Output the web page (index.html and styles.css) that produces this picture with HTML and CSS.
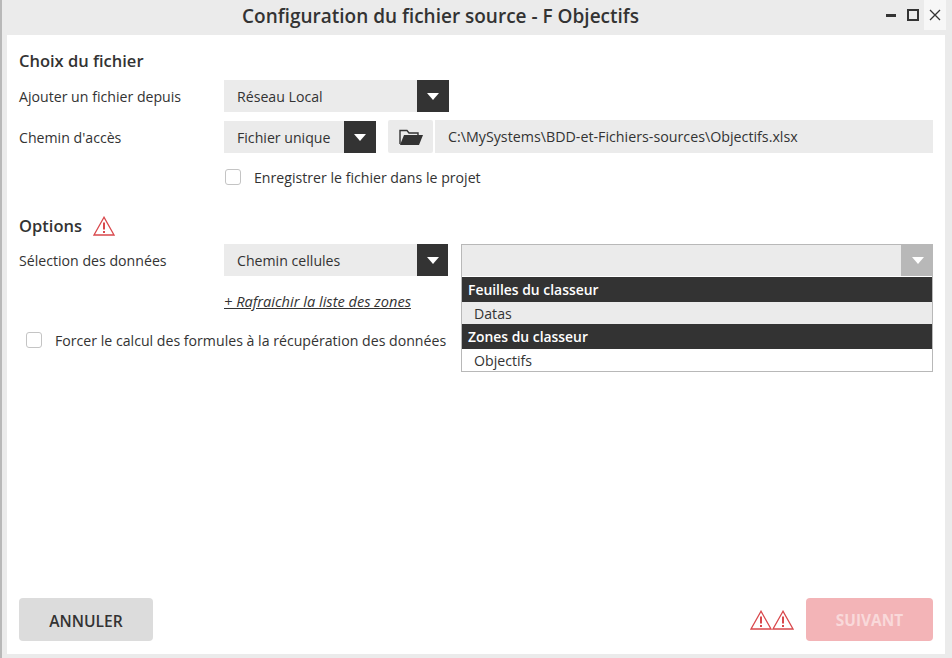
FILE: index.html
```html
<!DOCTYPE html>
<html lang="fr">
<head>
    <meta charset="UTF-8">
    <title>Configuration du fichier source</title>
    <link rel="stylesheet" href="styles.css">
</head>
<body>
    <div class="window">
        <header class="titlebar">
            <h1 class="title">Configuration du fichier source - F Objectifs</h1>
            <div class="win-buttons">
                <span class="win-btn"><span class="win-min"></span></span>
                <span class="win-btn"><span class="win-max"></span></span>
                <span class="win-btn win-close">
                    <svg width="12" height="12" viewBox="0 0 12 12"><path d="M1 1l10 10M11 1L1 11" stroke="#333" stroke-width="1.3" fill="none"/></svg>
                </span>
            </div>
        </header>

        <main class="content">
            <h2 class="section-title first">Choix du fichier</h2>

            <div class="row row-first">
                <label class="label">Ajouter un fichier depuis</label>
                <div class="select select-wide">
                    <span class="select-text">Réseau Local</span>
                    <span class="select-arrow"><i class="tri"></i></span>
                </div>
            </div>

            <div class="row row-second">
                <label class="label">Chemin d'accès</label>
                <div class="select select-small">
                    <span class="select-text">Fichier unique</span>
                    <span class="select-arrow"><i class="tri"></i></span>
                </div>
                <span class="folder-btn">
                    <svg width="24" height="18" viewBox="0 0 24 18">
                        <path d="M1 16V2.5h7l2 2.5h9v2" fill="none" stroke="#333" stroke-width="1.4"/>
                        <path d="M1 17L5 7h19l-4 10z" fill="#333"/>
                    </svg>
                </span>
                <span class="path-field">C:\MySystems\BDD-et-Fichiers-sources\Objectifs.xlsx</span>
            </div>

            <div class="check-row check-save">
                <span class="checkbox"></span>
                <span>Enregistrer le fichier dans le projet</span>
            </div>

            <h2 class="section-title options">Options
                <svg class="warn" viewBox="0 0 22 20"><path d="M11 1.2L1 19h20z" fill="#fff" stroke="#d9484c" stroke-width="1.3"/><path d="M11 6.5v7M11 15v2" stroke="#d9484c" stroke-width="2"/></svg>
            </h2>

            <div class="row row-data">
                <label class="label">Sélection des données</label>
                <div class="select select-data">
                    <span class="select-text">Chemin cellules</span>
                    <span class="select-arrow"><i class="tri"></i></span>
                </div>
            </div>

            <a class="refresh">+ Rafraichir la liste des zones</a>

            <div class="check-row check-force">
                <span class="checkbox"></span>
                <span>Forcer le calcul des formules à la récupération des données</span>
            </div>

            <div class="dropdown">
                <div class="dropdown-head">
                    <span class="dropdown-arrow"><i class="tri"></i></span>
                </div>
                <div class="group">Feuilles du classeur</div>
                <div class="item item-active">Datas</div>
                <div class="group group-zones">Zones du classeur</div>
                <div class="item">Objectifs</div>
            </div>

            <footer class="footer">
                <button class="btn btn-cancel">ANNULER</button>
                <div class="footer-right">
                    <svg class="warn" viewBox="0 0 22 20"><path d="M11 1.2L1 19h20z" fill="#fff" stroke="#d9484c" stroke-width="1.3"/><path d="M11 6.5v7M11 15v2" stroke="#d9484c" stroke-width="2"/></svg>
                    <svg class="warn" viewBox="0 0 22 20"><path d="M11 1.2L1 19h20z" fill="#fff" stroke="#d9484c" stroke-width="1.3"/><path d="M11 6.5v7M11 15v2" stroke="#d9484c" stroke-width="2"/></svg>
                    <button class="btn btn-next">SUIVANT</button>
                </div>
            </footer>
        </main>
    </div>
</body>
</html>
```

FILE: styles.css
```css
* {
    box-sizing: border-box;
}
body {
    margin: 0;
    width: 952px;
    height: 658px;
    overflow: hidden;
    background-color: #ebebeb;
    font-family: "Open Sans", "Noto Sans", sans-serif;
    font-size: 14.15px;
    color: #333;
}
.window {
    height: 658px;
    display: flex;
    flex-direction: column;
    border-left: 2px solid #b8b8b8;
}
.titlebar {
    height: 35px;
    flex: none;
    display: flex;
    justify-content: center;
    align-items: center;
    position: relative;
    padding: 0 73px 3px 0;
}
.title {
    margin: 0;
    font-size: 19px;
    font-weight: 600;
    color: #333;
}
.win-buttons {
    position: absolute;
    top: 0;
    right: 6px;
    display: flex;
}
.win-btn {
    width: 22px;
    height: 30px;
    display: flex;
    align-items: center;
    justify-content: center;
}
.win-min {
    width: 10px;
    height: 3px;
    background-color: #333;
}
.win-max {
    width: 12px;
    height: 12px;
    border: 2px solid #333;
}
.win-close {
    background-color: #f7f7f7;
}

.content {
    flex: 1;
    position: relative;
    margin: 0 7px 4px 5px;
    padding: 0 12px;
    background-color: #fff;
    display: flex;
    flex-direction: column;
}
.section-title {
    margin: 0;
    font-size: 16.5px;
    font-weight: 600;
    line-height: 22px;
    display: flex;
    align-items: center;
}
.section-title.first {
    margin-top: 15px;
}
.section-title.options {
    margin-top: 28px;
    gap: 11px;
}

.row {
    display: flex;
    align-items: center;
    height: 32px;
    margin-top: 7px;
}
.row-first {
    margin-top: 8px;
}
.row-second {
    margin-top: 8px;
    height: 33px;
    align-items: flex-end;
}
.row-second .label {
    padding-top: 2px;
}
.row-data {
    margin-top: 7px;
}
.label {
    width: 205px;
    flex: none;
    align-self: center;
}
.select {
    height: 32px;
    display: flex;
    justify-content: space-between;
    background-color: #ebebeb;
}
.select-wide {
    width: 225px;
}
.select-small {
    width: 152px;
}
.select-data {
    width: 224px;
}
.select-data .select-arrow {
    width: 31px;
}
.select-text {
    padding-left: 13px;
    line-height: 33px;
}
.select-arrow {
    width: 32px;
    background-color: #333;
    display: flex;
    align-items: center;
    justify-content: center;
}
.tri {
    width: 0;
    height: 0;
    border-left: 6.5px solid transparent;
    border-right: 6.5px solid transparent;
    border-top: 7px solid #fff;
}
.folder-btn {
    width: 45px;
    height: 33px;
    margin-left: 12px;
    background-color: #ebebeb;
    border-radius: 2px;
    display: flex;
    align-items: center;
    justify-content: center;
}
.path-field {
    width: 498px;
    height: 33px;
    margin-left: 2px;
    padding-left: 13px;
    background-color: #ebebeb;
    font-size: 14.25px;
    line-height: 34px;
}
.check-row {
    display: flex;
    align-items: center;
    height: 20px;
}
.checkbox {
    width: 16px;
    height: 16px;
    flex: none;
    border: 1px solid #c4c4c4;
    border-radius: 3px;
    background-color: #fff;
}
.check-save {
    margin-top: 14px;
    margin-left: 206px;
    gap: 13px;
}
.refresh {
    margin-top: 15px;
    margin-left: 205px;
    font-size: 14.6px;
    font-style: italic;
    text-decoration: underline;
    line-height: 20px;
    color: #333;
}
.check-force {
    margin-top: 19px;
    margin-left: 7px;
    gap: 13px;
}

.dropdown {
    position: absolute;
    left: 454px;
    top: 209px;
    width: 472px;
    height: 128px;
    background-color: #fff;
    border: 1px solid #b8b8b8;
}
.dropdown-head {
    height: 31px;
    background-color: #ebebeb;
    display: flex;
    justify-content: flex-end;
}
.dropdown-arrow {
    width: 31px;
    padding-left: 2px;
    background-color: #b8b8b8;
    display: flex;
    align-items: center;
    justify-content: center;
}
.group {
    height: 25px;
    margin-top: 1px;
    padding-left: 6px;
    background-color: #333;
    color: #fff;
    font-size: 13.9px;
    font-weight: 600;
    line-height: 25px;
}
.group-zones {
    margin-top: 0;
}
.item {
    height: 22px;
    padding-left: 12px;
    line-height: 23px;
}
.item-active {
    background-color: #ebebeb;
}

.footer {
    margin-top: auto;
    margin-bottom: 13px;
    display: flex;
    justify-content: space-between;
    align-items: center;
}
.btn {
    height: 43px;
    padding: 2px 0 0;
    border: none;
    border-radius: 4px;
    font-family: inherit;
    font-size: 15.6px;
    font-weight: 600;
}
.btn-cancel {
    width: 134px;
    background-color: #dcdcdc;
    color: #333;
}
.btn-next {
    width: 127px;
    margin-left: 12px;
    background-color: #f3b4b7;
    color: #f9d9da;
    font-size: 15.4px;
    font-weight: 700;
}
.footer-right {
    display: flex;
    align-items: center;
}
.warn {
    width: 22px;
    height: 20px;
}
```
